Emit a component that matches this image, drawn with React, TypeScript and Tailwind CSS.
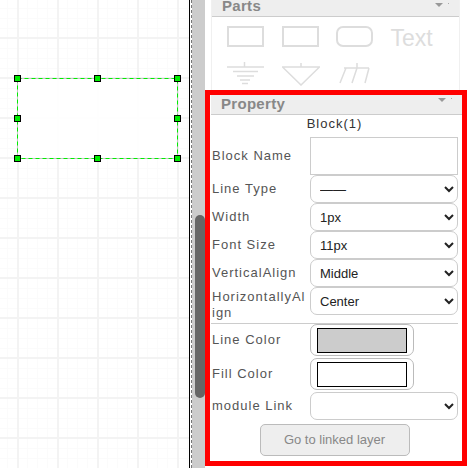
const handles = [
  [17, 78], [97, 78], [177, 78],
  [17, 118], [177, 118],
  [17, 158], [97, 158], [177, 158],
];

function Canvas() {
  return (
    <div className="relative h-full w-[189px] bg-white [background-image:linear-gradient(#f3f3f3_2px,transparent_2px),linear-gradient(90deg,#f3f3f3_2px,transparent_2px),linear-gradient(#fbfbfb_1px,transparent_1px),linear-gradient(90deg,#fbfbfb_1px,transparent_1px)] [background-size:40px_40px,40px_40px,10px_10px,10px_10px] [background-position:0_-3px,17px_0,0_-2px,7px_0]">
      <svg width="189" height="468" className="absolute left-0 top-0">
        <rect x="17.5" y="78.5" width="160" height="80" fill="#fff" fillOpacity="0.85" stroke="#c4c4c4" />
        <rect x="17.5" y="78.5" width="160" height="80" fill="none" stroke="#00ee00" strokeDasharray="4 3" />
        {handles.map(([x, y], i) => (
          <rect key={i} x={x - 2.5} y={y - 2.5} width="6" height="6" fill="#00ee00" stroke="#000" />
        ))}
      </svg>
    </div>
  );
}

function Scroller() {
  return (
    <div className="flex h-full">
      <div className="h-full w-px bg-black" />
      <div className="h-full w-px bg-white" />
      <div className="h-full w-0 border-l border-dashed border-[#777]" />
      <div className="h-full w-[13px] bg-[#cccccc] pl-[3px] pt-[215px]">
        <div className="h-[183px] w-[10px] rounded-full bg-[#666666]" />
      </div>
    </div>
  );
}

function Header({ title, size }: { title: string; size: string }) {
  return (
    <div className={`relative border-b border-[#cccccc] bg-[#eeeeee] pl-[10px] text-[15px] font-bold tracking-[0.3px] text-[#888888] ${size}`}>
      {title}
      <span className="absolute right-[16px] top-[3px] h-0 w-0 border-x-[4px] border-t-[4px] border-x-transparent border-t-[#999999]" />
      <span className="absolute right-[10px] top-[3px] h-px w-px bg-[#aaaaaa]" />
    </div>
  );
}

function PartsIcons() {
  return (
    <div className="grid grid-cols-[repeat(4,54.5px)] grid-rows-[36px_28px] pl-[15px] pt-[9px]">
      <div className="h-[21px] w-[37px] border-2 border-[#dddddd]" />
      <div className="h-[21px] w-[37px] border-2 border-[#dddddd]" />
      <div className="h-[21px] w-[37px] rounded-[7px] border-2 border-[#dddddd]" />
      <div className="text-[23px] leading-[24px] text-[#dddddd]">Text</div>
      <svg width="38" height="24" stroke="#dddddd" fill="none" strokeWidth="1.5">
        <path d="M17.5 0V5M0 5H37M6 9.5H31M10 14H27M13 18H23M15 21.5H21" />
      </svg>
      <svg width="38" height="24" stroke="#dddddd" fill="none" strokeWidth="1.5">
        <path d="M19 1V5M0.5 5H37.5L19 23Z" />
      </svg>
      <svg width="38" height="24" stroke="#dddddd" fill="none" strokeWidth="1.5">
        <path d="M8 6H33M10 6L4 21M21 6L16 21M33 6L29 21M21 6V1" />
      </svg>
    </div>
  );
}

function Row({ label, top, children }: { label: string; top?: boolean; children: React.ReactNode }) {
  return (
    <div className={top ? 'flex items-start' : 'flex items-center'}>
      <div className={top ? 'w-[99px] shrink-0 pr-[4px] pt-[2px]' : 'w-[99px] shrink-0 pr-[4px]'}>
        <label className="block break-all pl-px text-[13px] leading-[16px] tracking-[1px] text-[#555555]">{label}</label>
      </div>
      {children}
    </div>
  );
}

function Select({ value }: { value: string }) {
  return (
    <select
      defaultValue={value}
      className="h-7 w-[148px] rounded-[7px] border border-[#cccccc] bg-white pl-[5px] text-[13px] text-[#222222]"
    >
      <option value={value}>{value}</option>
    </select>
  );
}

function Swatch({ color }: { color: string }) {
  return (
    <div className="flex h-8 w-[104px] items-center justify-center rounded-[7px] border border-[#bbbbbb] bg-white">
      <div className={`h-[25px] w-[90px] border border-black ${color}`} />
    </div>
  );
}

function Property() {
  return (
    <div className="h-[376px] w-[262px] border-[5px] border-[#ff0000] bg-white pl-px">
      <Header title="Property" size="h-5 leading-[18px]" />
      <div className="w-[248px] pr-px">
        <div className="h-[22px] text-center text-[13px] leading-[18px] tracking-[1px] text-[#333333]">Block(1)</div>
        <Row label="Block Name">
          <input className="h-[38px] w-[148px] border border-[#cccccc] bg-white" />
        </Row>
        <Row label="Line Type"><Select value="——" /></Row>
        <Row label="Width"><Select value="1px" /></Row>
        <Row label="Font Size"><Select value="11px" /></Row>
        <Row label="VerticalAlign"><Select value="Middle" /></Row>
        <Row label="HorizontallyAlign" top><Select value="Center" /></Row>
        <div className="mt-[2px] border-t border-[#cccccc]" />
        <div className="flex flex-col gap-[2px]">
          <Row label="Line Color"><Swatch color="bg-[#cccccc]" /></Row>
          <Row label="Fill Color"><Swatch color="bg-white" /></Row>
          <Row label="module Link"><Select value="" /></Row>
        </div>
        <div className="flex justify-center pt-1">
          <button disabled className="h-8 w-[150px] rounded-[5px] border border-[#bbbbbb] bg-[#eeeeee] text-[13px] text-[#888888]">
            Go to linked layer
          </button>
        </div>
      </div>
    </div>
  );
}

export default function App() {
  return (
    <div className="flex h-[468px] w-[470px] overflow-hidden bg-white font-['Liberation_Sans',Arial,sans-serif]">
      <Canvas />
      <Scroller />
      <div className="flex-1">
        <div className="ml-[6px] h-[90px] w-[249px] overflow-hidden border-x border-[#f0f0f0]">
          <Header title="Parts" size="h-[17px] leading-[12px]" />
          <PartsIcons />
        </div>
        <Property />
      </div>
    </div>
  );
}
